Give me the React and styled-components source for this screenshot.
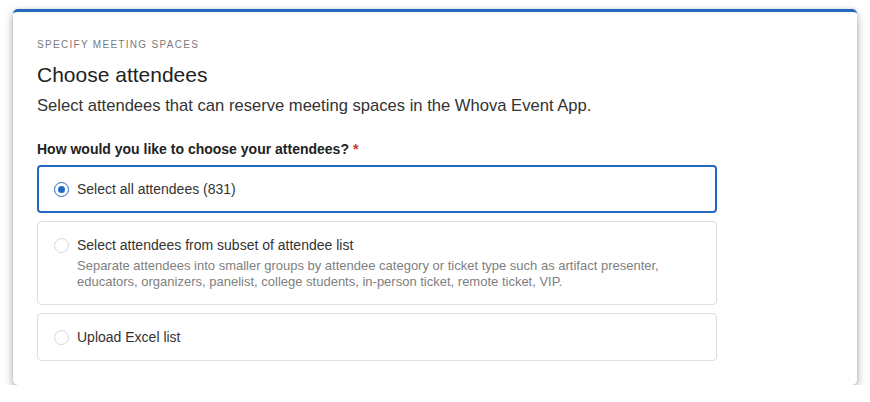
import React, { useState } from "react";
import styled, { createGlobalStyle } from "styled-components";

const GlobalStyle = createGlobalStyle`
  body {
    margin: 0;
    background: #ffffff;
    font-family: "Liberation Sans", Arial, sans-serif;
  }
`;

const Page = styled.div`
  padding: 9px 13px 0 13px;
`;

const Card = styled.div`
  box-sizing: border-box;
  height: 376px;
  background: #fff;
  border-top: 3px solid #2469c1;
  border-radius: 5px;
  box-shadow: 0 4px 10px rgba(0, 0, 0, 0.32), 0 0 3px rgba(0, 0, 0, 0.14);
  padding: 26px 24px 24px 24px;
`;

const Eyebrow = styled.div`
  font-size: 10px;
  line-height: 14px;
  letter-spacing: 1.3px;
  color: #7a7a7a;
  text-transform: uppercase;
`;

const Title = styled.h2`
  margin: 11px 0 0 0;
  font-size: 21px;
  line-height: 24px;
  font-weight: 400;
  color: #222;
`;

const Subtitle = styled.p`
  margin: 9px 0 0 0;
  font-size: 16.6px;
  line-height: 20px;
  color: #333;
`;

const Label = styled.div`
  margin-top: 24px;
  font-size: 14px;
  line-height: 18px;
  font-weight: 700;
  color: #222;
`;

const Required = styled.span`
  color: #d0312d;
  margin-left: 4px;
`;

const Options = styled.div`
  margin-top: 7px;
  display: flex;
  flex-direction: column;
  gap: 8px;
  width: 680px;
`;

const Option = styled.label`
  box-sizing: border-box;
  display: flex;
  align-items: ${(p) => (p.$tall ? "flex-start" : "center")};
  gap: 8px;
  min-height: 48px;
  border: ${(p) => (p.$active ? "2px solid #2469c1" : "1px solid #dedede")};
  border-radius: 4px;
  padding: ${(p) =>
    p.$active ? "13px 15px" : p.$tall ? "14px 16px 14px" : "13px 16px"};
  cursor: pointer;
`;

const Radio = styled.span`
  box-sizing: border-box;
  flex: none;
  width: 15px;
  height: 15px;
  margin-top: ${(p) => (p.$tall ? "2px" : "0")};
  border-radius: 50%;
  border: 1px solid ${(p) => (p.$checked ? "#2469c1" : "#d6d6d6")};
  display: flex;
  align-items: center;
  justify-content: center;
  &::after {
    content: "";
    width: 7px;
    height: 7px;
    border-radius: 50%;
    background: ${(p) => (p.$checked ? "#2469c1" : "transparent")};
  }
`;

const OptionBody = styled.div`
  display: flex;
  flex-direction: column;
`;

const OptionTitle = styled.div`
  font-size: 14px;
  line-height: 18px;
  color: #333;
`;

const OptionDesc = styled.div`
  margin-top: 4px;
  font-size: 13px;
  line-height: 16px;
  color: #808080;
`;

const options = [
  { id: "all", title: "Select all attendees (831)" },
  {
    id: "subset",
    title: "Select attendees from subset of attendee list",
    desc: "Separate attendees into smaller groups by attendee category or ticket type such as artifact presenter, educators, organizers, panelist, college students, in-person ticket, remote ticket, VIP.",
  },
  { id: "excel", title: "Upload Excel list" },
];

export default function App() {
  const [selected, setSelected] = useState("all");
  return (
    <Page>
      <GlobalStyle />
      <Card>
        <Eyebrow>Specify meeting spaces</Eyebrow>
        <Title>Choose attendees</Title>
        <Subtitle>
          Select attendees that can reserve meeting spaces in the Whova Event App.
        </Subtitle>
        <Label>
          How would you like to choose your attendees?<Required>*</Required>
        </Label>
        <Options>
          {options.map((o) => (
            <Option
              key={o.id}
              $active={selected === o.id}
              $tall={!!o.desc}
              onClick={() => setSelected(o.id)}
            >
              <Radio $checked={selected === o.id} $tall={!!o.desc} />
              <OptionBody>
                <OptionTitle>{o.title}</OptionTitle>
                {o.desc && <OptionDesc>{o.desc}</OptionDesc>}
              </OptionBody>
            </Option>
          ))}
        </Options>
      </Card>
    </Page>
  );
}
